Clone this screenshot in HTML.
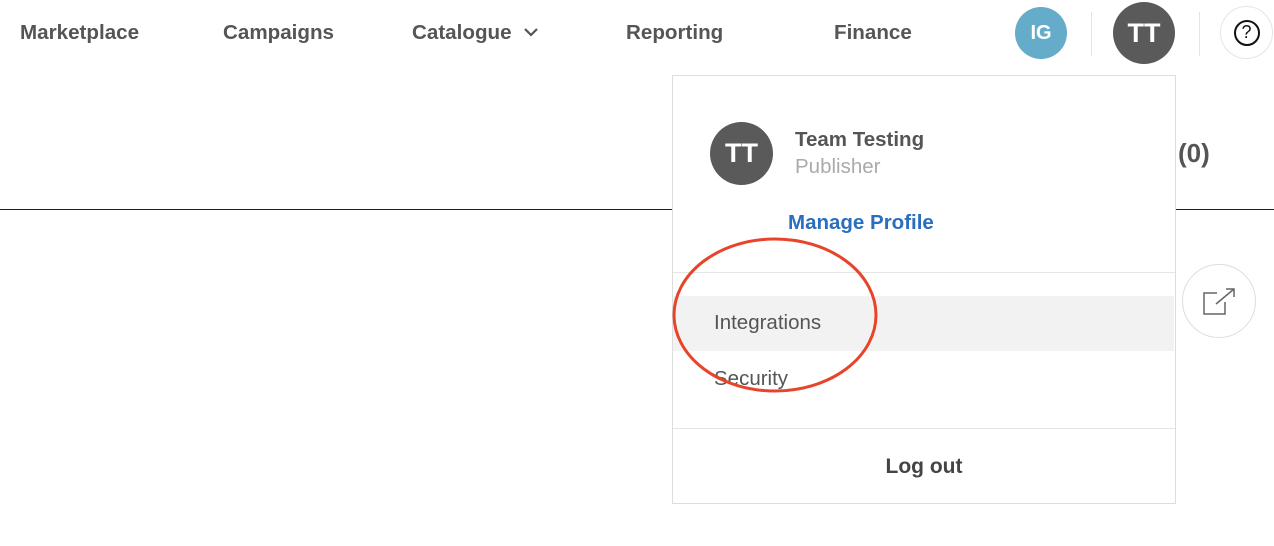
<!DOCTYPE html>
<html><head><style>
body{margin:0;width:1274px;height:546px;background:#fff;position:relative;overflow:hidden;font-family:"Liberation Sans",sans-serif;color:#555}
.a{position:absolute;white-space:nowrap}
.nav{font-size:20.6px;font-weight:bold;top:21px;color:#555}
.c{position:absolute;border-radius:50%;display:flex;align-items:center;justify-content:center;color:#fff;font-weight:bold}
</style></head><body>
<div class="a nav" style="left:20px">Marketplace</div>
<div class="a nav" style="left:223px">Campaigns</div>
<div class="a nav" style="left:412px">Catalogue</div>
<svg class="a" style="left:522px;top:26px" width="18" height="12"><path d="M3 3l6 6 6-6" stroke="#555" stroke-width="2.2" fill="none"/></svg>
<div class="a nav" style="left:626px">Reporting</div>
<div class="a nav" style="left:834px">Finance</div>
<div class="c" style="left:1015px;top:7px;width:52px;height:52px;background:#64acc9;font-size:20px">IG</div>
<div class="a" style="left:1091px;top:12px;width:1px;height:44px;background:#e3e3e3"></div>
<div class="c" style="left:1113px;top:2px;width:62px;height:62px;background:#5a5a5a;font-size:27px">TT</div>
<div class="a" style="left:1199px;top:12px;width:1px;height:44px;background:#e3e3e3"></div>
<div class="c" style="left:1220px;top:6px;width:53px;height:53px;border:1px solid #e5e5e5;box-sizing:border-box;color:#111;font-size:20px"><span style="display:inline-flex;width:26px;height:26px;border:2px solid #111;border-radius:50%;align-items:center;justify-content:center;box-sizing:border-box;font-size:18px;font-weight:normal">?</span></div>
<div class="a" style="left:1178px;top:138px;font-size:26px;font-weight:bold">(0)</div>
<div class="a" style="left:0;top:209px;width:1274px;height:1px;background:#222"></div>
<div class="a" style="left:1182px;top:264px;width:74px;height:74px;border:1px solid #ddd;border-radius:50%;box-sizing:border-box"></div>
<svg class="a" style="left:1202px;top:286px" width="36" height="30"><path d="M15 7H2v21h21V16" stroke="#666" stroke-width="1.5" fill="none"/><path d="M14 18L32 3M24 3h8v8" stroke="#666" stroke-width="1.5" fill="none"/></svg>
<div class="a" style="left:672px;top:75px;width:504px;height:429px;border:1px solid #ddd;box-sizing:border-box;background:#fff">
<div class="c" style="left:37px;top:46px;width:63px;height:63px;background:#5a5a5a;font-size:27px">TT</div>
<div class="a" style="left:122px;top:52px;font-size:20.5px;font-weight:bold">Team Testing</div>
<div class="a" style="left:122px;top:79px;font-size:20.5px;color:#aaa">Publisher</div>
<div class="a" style="left:115px;top:135px;font-size:20.5px;font-weight:bold;color:#2a6ebd">Manage Profile</div>
<div class="a" style="left:0;top:196px;width:502px;height:1px;background:#e5e5e5"></div>
<div class="a" style="left:0;top:220px;width:501px;height:55px;background:#f2f2f2"></div>
<div class="a" style="left:41px;top:235px;font-size:20.5px">Integrations</div>
<div class="a" style="left:41px;top:291px;font-size:20.5px">Security</div>
<div class="a" style="left:0;top:352px;width:502px;height:1px;background:#e5e5e5"></div>
<div class="a" style="left:0;top:379px;width:502px;text-align:center;font-size:21px;font-weight:bold;color:#444">Log out</div>
</div>
<svg class="a" style="left:0;top:0" width="1274" height="546"><ellipse cx="775" cy="315" rx="101" ry="76" stroke="#e8442a" stroke-width="3" fill="none"/></svg>
</body></html>
